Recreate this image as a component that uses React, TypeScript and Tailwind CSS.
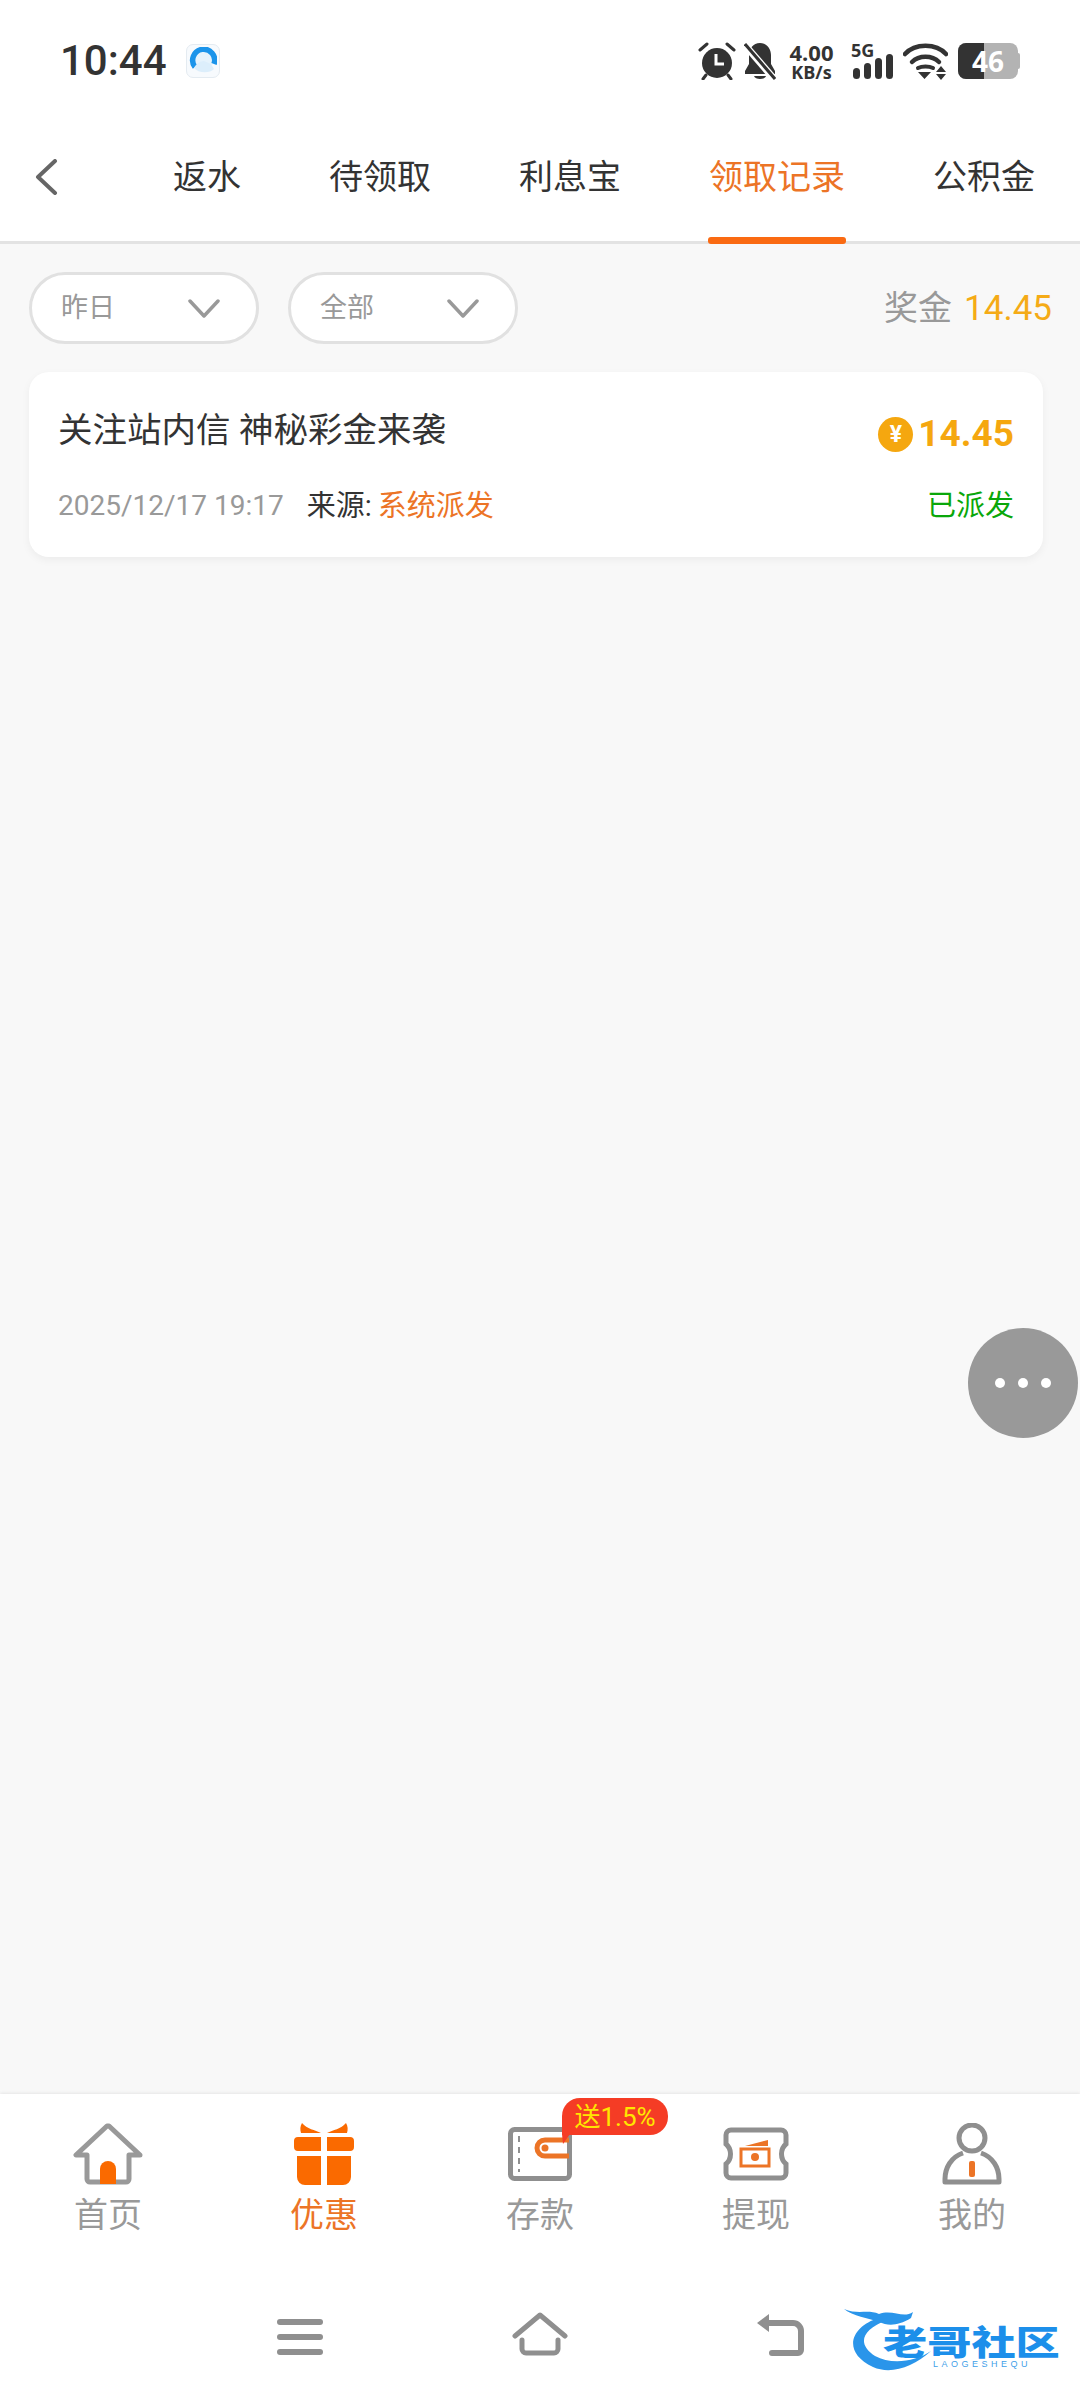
import React from "react";

const cjk = "font-['Roboto','Noto_Sans_CJK_SC',sans-serif]";

const tabs = ["返水", "待领取", "利息宝", "领取记录", "公积金"];

const StatusIcons = () => (
  <div className="flex h-[38px] items-center text-[#333]">
    <svg width="38" height="38" viewBox="0 0 38 38" className="mr-[8px]">
      <circle cx="19" cy="21" r="15" fill="#333" />
      <path d="M18 12v10h8" fill="none" stroke="#fff" strokeWidth="3" />
      <path d="M2 8l7-6M36 8l-7-6M8 33l-3 4M30 33l3 4" stroke="#333" strokeWidth="3" strokeLinecap="round" />
    </svg>
    <svg width="32" height="38" viewBox="0 0 32 38" className="mr-[11px]">
      <path d="M16 1c7 0 11 6 11 12v9l4 7v3H1v-3l4-7v-9C5 7 9 1 16 1z" fill="#333" />
      <path d="M10 34h12c-1 4-11 4-12 0z" fill="#333" />
      <path d="M0 2l31 36" stroke="#fff" strokeWidth="7" />
      <path d="M1 2l30 35" stroke="#333" strokeWidth="3" />
    </svg>
    <div className="mr-[15px] flex w-[49px] flex-col items-center font-['Open_Sans',sans-serif] font-bold">
      <span className="text-[22px] leading-[21px]">4.00</span>
      <span className="text-[18px] leading-[18px]">KB/s</span>
    </div>
    <div className="relative mr-[10px] h-[38px] w-[42px]">
      <span className="absolute left-0 top-[-3px] font-['Open_Sans',sans-serif] text-[18px] font-bold leading-[22px]">5G</span>
      <svg width="42" height="38" viewBox="0 0 42 38" className="absolute inset-0">
        <rect x="2" y="26" width="7" height="11" rx="3.500" fill="#333" />
        <rect x="13" y="21" width="7" height="16" rx="3.500" fill="#333" />
        <rect x="24" y="16" width="7" height="21" rx="3.500" fill="#333" />
        <rect x="35" y="12" width="7" height="25" rx="3.500" fill="#333" />
      </svg>
    </div>
    <svg width="45" height="38" viewBox="0 0 45 38" className="mr-[10px]">
      <path d="M2 12C12 1 33 1 43 12" fill="none" stroke="#333" strokeWidth="4.500" strokeLinecap="round" />
      <path d="M9 20c7-7 20-7 27 0" fill="none" stroke="#333" strokeWidth="4.500" strokeLinecap="round" />
      <path d="M15 26c4-2 11-2 15 0" fill="none" stroke="#333" strokeWidth="4" strokeLinecap="round" />
      <path d="M15 30h13l-6.500 7zM38 24l5 6H33zM38 38l5-6H33z" fill="#333" />
    </svg>
    <div className="relative flex h-[36px] w-[60px] overflow-hidden rounded-[8px] bg-[#b3b3b3]">
      <div className="w-[26px] bg-[#333]" />
      <span className="absolute inset-0 flex items-center justify-center font-['Open_Sans',sans-serif] text-[28px] font-bold text-white">46</span>
    </div>
    <div className="h-[16px] w-[2px] rounded-r-[2px] bg-[#b3b3b3]" />
  </div>
);

const StatusBar = () => (
  <div className="flex h-[80px] items-end justify-between pl-[60px] pr-[60px]">
    <div className="mb-[1px] flex h-[36px] items-center gap-[19px]">
      <span className="text-[42px] font-medium leading-none text-[#333]">10:44</span>
      <div className="flex h-[34px] w-[34px] items-center justify-center rounded-[7px] border border-[#e4ebf1] bg-[#f7fafd]">
        <svg width="28" height="28" viewBox="0 0 28 28">
          <circle cx="14" cy="14" r="10" fill="#e6f3fc" />
          <path d="M6 20A11 11 0 1 1 25 17" fill="none" stroke="#1b94ea" strokeWidth="5.500" />
          <path d="M5 21c4 5 15 6 20 1l-3-5-7-3c-4 0-8 3-10 7z" fill="#dceefb" />
        </svg>
      </div>
    </div>
    <StatusIcons />
  </div>
);

const TabBar = () => (
  <div className="flex h-[164px] items-start border-b-[3px] border-[#e3e3e3] pt-[76px]">
    <svg width="24" height="36" viewBox="0 0 24 36" className="ml-[34px] mt-[3px] shrink-0">
      <path d="M21 2L4 18l17 16" fill="none" stroke="#666" strokeWidth="4" strokeLinecap="round" strokeLinejoin="round" />
    </svg>
    <div className="ml-[115px] flex gap-[88px]">
      {tabs.map((t) => (
        <div
          key={t}
          className={`relative shrink-0 whitespace-nowrap text-[34px] leading-[42px] ${
            t === "领取记录" ? "text-[#ec7426]" : "text-[#333]"
          }`}
        >
          {t}
          {t === "领取记录" && <div className="absolute left-[-1px] right-[-1px] top-[81px] h-[7px] rounded-[3px] bg-[#fa6a12]" />}
        </div>
      ))}
    </div>
  </div>
);

const Pill = ({ label }: { label: string }) => (
  <div className="flex h-[72px] w-[230px] items-center justify-between rounded-full border-[3px] border-[#e1e1e1] bg-white pl-[29px] pr-[36px]">
    <span className="text-[27px] text-[#999]">{label}</span>
    <svg width="32" height="20" viewBox="0 0 32 20">
      <path d="M2 3l14 15L30 3" fill="none" stroke="#999" strokeWidth="3.500" strokeLinecap="round" strokeLinejoin="round" />
    </svg>
  </div>
);

const NavIcon = ({ name }: { name: string }) => {
  if (name === "首页")
    return (
      <svg width="70" height="62" viewBox="0 0 70 62">
        <path d="M34 3L3 32h11v24a3 3 0 0 0 3 3h36a3 3 0 0 0 3-3V32h11L36 3z" fill="none" stroke="#999" strokeWidth="5" strokeLinejoin="round" />
        <path d="M27 61V46a8 8 0 0 1 16 0v15z" fill="#fa6a00" />
      </svg>
    );
  if (name === "优惠")
    return (
      <svg width="62" height="62" viewBox="0 0 62 62">
        <path d="M28 10C22 7 14 6 9 0c-2 3-2 7-1 10zM34 10C40 7 48 6 53 0c2 3 2 7 1 10z" fill="#fa6a00" />
        <path d="M5 14h23v14H5a4 4 0 0 1-4-4v-6a4 4 0 0 1 4-4zM34 14h23a4 4 0 0 1 4 4v6a4 4 0 0 1-4 4H34z" fill="#fa6a00" />
        <path d="M4 33h24v29H12a8 8 0 0 1-8-8zM34 33h24v21a8 8 0 0 1-8 8H34z" fill="#fa6a00" />
      </svg>
    );
  if (name === "存款")
    return (
      <svg width="64" height="54" viewBox="0 0 64 54">
        <rect x="2.500" y="2.500" width="59" height="49" rx="4" fill="none" stroke="#8f8f8f" strokeWidth="5" />
        <path d="M11 9v36" stroke="#8f8f8f" strokeWidth="2" strokeDasharray="6 5" />
        <path d="M61 13H37a8 8 0 0 0 0 16h24" fill="none" stroke="#ec7426" strokeWidth="5" />
        <circle cx="37" cy="21" r="3.500" fill="#ec7426" />
      </svg>
    );
  if (name === "提现")
    return (
      <svg width="66" height="54" viewBox="0 0 66 54">
        <path d="M8 3h50a5 5 0 0 1 5 5v9c-6 5-6 15 0 20v9a5 5 0 0 1-5 5H8a5 5 0 0 1-5-5V37c6-5 6-15 0-20V8a5 5 0 0 1 5-5z" fill="none" stroke="#8f8f8f" strokeWidth="5" />
        <rect x="18" y="22" width="28" height="17" fill="none" stroke="#ec7426" strokeWidth="3" />
        <circle cx="32" cy="30" r="4" fill="#ec7426" />
        <path d="M22 19l23-6v6z" fill="#ec7426" />
      </svg>
    );
  return (
    <svg width="60" height="62" viewBox="0 0 60 62">
      <circle cx="30" cy="15" r="13" fill="none" stroke="#8f8f8f" strokeWidth="5" />
      <path d="M21 30C9 34 3 45 3 56v3h54v-3c0-11-6-22-18-26" fill="none" stroke="#8f8f8f" strokeWidth="5" strokeLinejoin="round" />
      <rect x="27" y="38" width="6" height="16" rx="2" fill="#ec7426" />
    </svg>
  );
};

const nav = ["首页", "优惠", "存款", "提现", "我的"];

const BottomNav = () => (
  <div className="relative h-[306px] bg-white shadow-[0_-1px_3px_rgba(0,0,0,0.08)]">
    <div className="grid grid-cols-5 pt-[28px]">
      {nav.map((n) => (
        <div key={n} className="relative flex flex-col items-center">
          <div className="flex h-[64px] items-center justify-center">
            <NavIcon name={n} />
          </div>
          <span className={`mt-[6px] text-[34px] leading-[46px] ${n === "优惠" ? "text-[#ec7426]" : "text-[#999]"}`}>{n}</span>
          {n === "存款" && (
            <div className="absolute left-[130px] top-[-24px] flex h-[37px] w-[106px] items-center justify-center rounded-[18px] rounded-bl-none bg-[#f53c25] text-[26px] leading-none text-[#ffe600]">
              送1.5%
              <svg width="8" height="10" viewBox="0 0 8 10" className="absolute left-0 top-[36px]">
                <path d="M0 0h8L1 10z" fill="#f53c25" />
              </svg>
            </div>
          )}
        </div>
      ))}
    </div>
    <div className="absolute inset-x-0 top-[218px] flex items-center">
      <svg width="46" height="44" viewBox="0 0 46 44" className="ml-[277px]">
        <rect x="0" y="7" width="46" height="6" rx="3" fill="#8f8f8f" />
        <rect x="0" y="22" width="46" height="6" rx="3" fill="#8f8f8f" />
        <rect x="0" y="37" width="46" height="6" rx="3" fill="#8f8f8f" />
      </svg>
      <svg width="56" height="44" viewBox="0 0 56 44" className="ml-[189px]">
        <path d="M3 24L28 3l25 21" fill="none" stroke="#8f8f8f" strokeWidth="5" strokeLinecap="round" strokeLinejoin="round" />
        <path d="M10 28v9a4 4 0 0 0 4 4h28a4 4 0 0 0 4-4v-9" fill="none" stroke="#8f8f8f" strokeWidth="5" strokeLinecap="round" />
      </svg>
      <svg width="50" height="44" viewBox="0 0 50 44" className="ml-[187px]">
        <path d="M2 11L14 2v18z" fill="#8f8f8f" />
        <path d="M10 11h28a8 8 0 0 1 8 8v19a3 3 0 0 1-3 3H17" fill="none" stroke="#8f8f8f" strokeWidth="6" strokeLinecap="round" strokeLinejoin="round" />
      </svg>
    </div>
    <div className="absolute left-[843px] top-[210px] h-[70px] w-[225px]">
      <svg width="100" height="70" viewBox="0 0 100 70" className="absolute left-0 top-0">
        <path d="M36 14C8 22-2 48 30 63c18 8 40 0 58-16-16 11-40 14-56 5C14 40 18 26 44 16z" fill="#2a95ea" />
        <path d="M1 5c14 6 24 0 35 5 14-5 24 5 34-2l-2 6c-13 8-23 8-32 4C25 14 10 12 1 5z" fill="#2a95ea" />
      </svg>
      <span className="absolute left-[40px] top-[19px] origin-left scale-x-[1.3] whitespace-nowrap text-[34px] font-black leading-[40px] text-[#1c8fea]">老哥社区</span>
      <span className="absolute left-[90px] top-[55px] whitespace-nowrap font-['Liberation_Sans',sans-serif] text-[9px] leading-[10px] tracking-[3.500px] text-[#3f9fe8]">LAOGESHEQU</span>
    </div>
  </div>
);

export default function App() {
  return (
    <div className={`flex h-[2400px] w-[1080px] flex-col overflow-hidden bg-[#f8f8f8] ${cjk}`}>
      <div className="bg-white">
        <StatusBar />
        <TabBar />
      </div>

      <div className="relative flex-1 px-[29px] pt-[28px]">
        <div className="flex items-center">
          <div className="flex gap-[29px]">
            <Pill label="昨日" />
            <Pill label="全部" />
          </div>
          <div className="ml-auto mr-[-1px] flex items-baseline gap-[12px]">
            <span className="text-[34px] leading-[44px] text-[#999]">奖金</span>
            <span className="text-[35px] leading-[44px] text-[#f5ab16]">14.45</span>
          </div>
        </div>

        <div className="mt-[28px] h-[185px] w-[1014px] rounded-[20px] bg-white px-[29px] pt-[31px] shadow-[0_3px_8px_rgba(0,0,0,0.05)]">
          <div className="flex items-center justify-between">
            <span className="text-[34.500px] leading-[46px] text-[#333]">关注站内信 神秘彩金来袭</span>
            <div className="flex items-center gap-[5px] pt-[8px]">
              <div className="flex h-[35px] w-[35px] items-center justify-center rounded-full bg-[#f5a70f] text-[23px] font-bold leading-none text-white">¥</div>
              <span className="text-[37px] font-bold leading-[46px] text-[#f5a70f]">14.45</span>
            </div>
          </div>
          <div className="mt-[29px] flex items-center leading-[40px]">
            <span className="text-[28px] text-[#999]">2025/12/17 19:17</span>
            <span className="ml-[23px] text-[29px] text-[#333]">来源:</span>
            <span className="ml-[6px] text-[29px] text-[#ec7426]">系统派发</span>
            <span className="ml-auto text-[29px] text-[#0aa70a]">已派发</span>
          </div>
        </div>

        <div className="absolute right-[2px] top-[1084px] flex h-[110px] w-[110px] items-center justify-center gap-[13px] rounded-full bg-[#999]">
          <div className="h-[10px] w-[10px] rounded-full bg-white" />
          <div className="h-[10px] w-[10px] rounded-full bg-white" />
          <div className="h-[10px] w-[10px] rounded-full bg-white" />
        </div>
      </div>

      <BottomNav />
    </div>
  );
}
